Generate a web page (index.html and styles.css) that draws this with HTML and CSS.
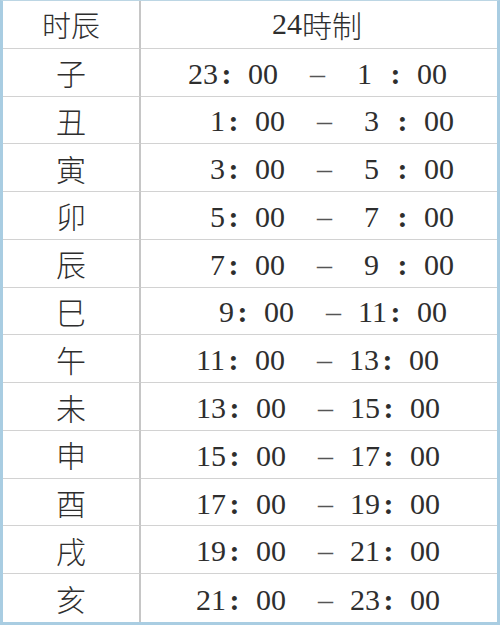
FILE: index.html
```html
<!DOCTYPE html>
<html>
<head>
<meta charset="utf-8">
<title>时辰 24時制</title>
<link rel="stylesheet" href="styles.css">
</head>
<body>
<div class="table">
  <div class="cell name head">时辰</div>
  <div class="cell time head"><span class="num">24</span>時制</div>

  <div class="cell name">子</div>
  <div class="cell time p-a">23<span class="c">:</span>00&ensp;&ensp;<span class="d">–</span>&ensp;&ensp;1&ensp;<span class="c">:</span>00</div>

  <div class="cell name">丑</div>
  <div class="cell time p-b">1<span class="c">:</span>00&ensp;&ensp;<span class="d">–</span>&ensp;&ensp;3&ensp;<span class="c">:</span>00</div>

  <div class="cell name">寅</div>
  <div class="cell time p-b">3<span class="c">:</span>00&ensp;&ensp;<span class="d">–</span>&ensp;&ensp;5&ensp;<span class="c">:</span>00</div>

  <div class="cell name">卯</div>
  <div class="cell time p-b">5<span class="c">:</span>00&ensp;&ensp;<span class="d">–</span>&ensp;&ensp;7&ensp;<span class="c">:</span>00</div>

  <div class="cell name">辰</div>
  <div class="cell time p-b">7<span class="c">:</span>00&ensp;&ensp;<span class="d">–</span>&ensp;&ensp;9&ensp;<span class="c">:</span>00</div>

  <div class="cell name">巳</div>
  <div class="cell time p-c">9<span class="c">:</span>00&ensp;&ensp;<span class="d">–</span>&ensp;11<span class="c">:</span>00</div>

  <div class="cell name">午</div>
  <div class="cell time p-d">11<span class="c">:</span>00&ensp;&ensp;<span class="d">–</span>&ensp;13<span class="c">:</span>00</div>

  <div class="cell name">未</div>
  <div class="cell time p-d">13<span class="c">:</span>00&ensp;&ensp;<span class="d">–</span>&ensp;15<span class="c">:</span>00</div>

  <div class="cell name">申</div>
  <div class="cell time p-d">15<span class="c">:</span>00&ensp;&ensp;<span class="d">–</span>&ensp;17<span class="c">:</span>00</div>

  <div class="cell name">酉</div>
  <div class="cell time p-d">17<span class="c">:</span>00&ensp;&ensp;<span class="d">–</span>&ensp;19<span class="c">:</span>00</div>

  <div class="cell name">戌</div>
  <div class="cell time p-d">19<span class="c">:</span>00&ensp;&ensp;<span class="d">–</span>&ensp;21<span class="c">:</span>00</div>

  <div class="cell name last">亥</div>
  <div class="cell time p-d last">21<span class="c">:</span>00&ensp;&ensp;<span class="d">–</span>&ensp;23<span class="c">:</span>00</div>
</div>
</body>
</html>
```

FILE: styles.css
```css
html, body {
  margin: 0;
  padding: 0;
  background: #ffffff;
}

.table {
  box-sizing: border-box;
  width: 500px;
  height: 625px;
  border-left: 3px solid #a9cde2;
  border-right: 3px solid #a9cde2;
  border-bottom: 3px solid #a9cde2;
  border-top: 1px solid #bcd6e4;
  display: grid;
  grid-template-columns: 138px 1fr;
  grid-template-rows: repeat(13, 1fr);
  color: #2e2e2e;
}

.cell {
  display: flex;
  align-items: center;
  border-bottom: 1px solid #d2d2d2;
  white-space: pre;
  font-size: 30px;
  line-height: 1;
}

.cell.last {
  border-bottom: none;
}

.name {
  justify-content: center;
  border-right: 2px solid #c6c6c6;
  font-family: "Noto Sans CJK SC", sans-serif;
  font-weight: 300;
}

.time {
  font-family: "Liberation Serif", serif;
  padding-top: 3px;
  box-sizing: border-box;
}

.time.head {
  justify-content: center;
  padding-top: 0;
  padding-right: 4px;
  font-family: "Noto Sans CJK SC", sans-serif;
  font-weight: 300;
}

.num {
  font-family: "Liberation Serif", serif;
  font-weight: 400;
}

.name.head {
  font-size: 29px;
}

.c {
  display: inline-block;
  box-sizing: border-box;
  width: 1em;
  padding-left: 0.12em;
  font-weight: 700;
}

.d {
  display: inline-block;
  width: 0.5em;
  margin: 0 2px;
  color: #555;
}

.p-a { padding-left: 47px; }
.p-b { padding-left: 69px; }
.p-c { padding-left: 78px; }
.p-d { padding-left: 55px; }
```
